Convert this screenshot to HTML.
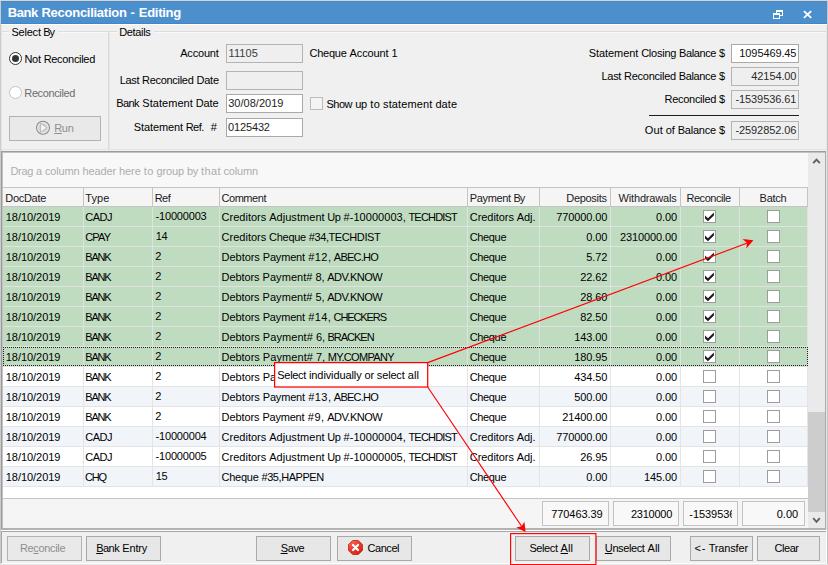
<!DOCTYPE html><html><head><meta charset="utf-8"><title>Bank Reconciliation</title><style>
*{box-sizing:border-box;margin:0;padding:0}
html,body{width:828px;height:565px;overflow:hidden;background:#f0f0f0}
body{font-family:"Liberation Sans",sans-serif;font-size:11px;color:#000;position:relative}
.a{position:absolute;white-space:pre}
.t{position:absolute;white-space:pre;line-height:13px;height:13px}
.inp{position:absolute;border:1px solid #a9a9a9;background:#fff;height:19px}
.inp.ro{background:#efefef;border-color:#b4b4b4}
.btn{position:absolute;border:1px solid #a9a9a9;background:#e7e7e7;height:25px}
.btn.dis{background:#e9e9e9;border-color:#b2b2b2}
u{text-decoration:underline}
.row{position:absolute;left:3px;width:805px;height:20px}
.g{background:#c0dcc0;border-bottom:1px solid #e0e2e0}
.w{background:#ffffff;border-bottom:1px solid #e4e4e4}
.b{background:#f1f5fa;border-bottom:1px solid #e4e4e4}
.hd{position:absolute;top:187px;height:20px;background:#f5f5f5;border-right:1px solid #c4c4c4;border-bottom:1px solid #c4c4c4;border-top:1px solid #c4c4c4}
.cb{position:absolute;width:13px;height:13px;border:1px solid #9d9d9d;background:#fff}
.sum{position:absolute;top:501px;height:25px;border:1px solid #c2c2c2;background:#f8f8f8;overflow:hidden}
</style></head><body>
<div class="a" style="left:0;top:0;width:1px;height:565px;background:#cbcbcb"></div>
<div class="a" style="left:1px;top:25px;width:1px;height:126px;background:#e4e4e4"></div>
<div class="a" style="left:826px;top:0;width:1px;height:565px;background:#e6e6e6"></div>
<div class="a" style="left:827px;top:0;width:1px;height:565px;background:#c4c4c4"></div>
<div class="a" style="left:0;top:0;width:828px;height:1px;background:#d9d6d2"></div>
<div class="a" style="left:1px;top:1px;width:826px;height:23px;background:#4c8fcd;border-top:1px solid #4788c8;border-bottom:1px solid #4485c6"></div>
<div class="a" style="left:1px;top:24px;width:826px;height:1px;background:#fdfdfd"></div>
<div class="t" style="left:7.90px;top:5px;color:#fff;font-size:13px;font-weight:bold;line-height:15px;height:15px"><span style="position:absolute;left:-0.19px;top:0;letter-spacing:-0.387px">Bank</span><span style="position:absolute;left:33.61px;top:0;letter-spacing:-0.270px">Reconciliation</span><span style="position:absolute;left:122.73px;top:0;letter-spacing:0.827px">-</span><span style="position:absolute;left:130.85px;top:0;letter-spacing:-0.255px">Editing</span></div>
<svg class="a" style="left:770px;top:6px" width="50" height="16" viewBox="770 6 50 16"><g fill="#fff"><path d="M776 10H783V16H780V15H782V12H777V13H776Z"/><path d="M773 13H780V19H773ZM774 15V18H779V15Z" fill-rule="evenodd"/></g><path d="M803.9 11.2L811.2 17.9M811.2 11.2L803.9 17.9" stroke="#fff" stroke-width="1.8" fill="none"/></svg>
<div class="a" style="left:2px;top:31px;width:824px;height:1px;background:#dcdcdc"></div>
<div class="a" style="left:2px;top:32px;width:824px;height:1px;background:#f8f8f8"></div>
<div class="a" style="left:108px;top:31px;width:1px;height:118px;background:#d9d9d9"></div>
<div class="a" style="left:109px;top:32px;width:1px;height:117px;background:#e6e6e6"></div>
<div class="a" style="left:2px;top:149px;width:824px;height:1px;background:#e4e4e4"></div>
<div class="a" style="left:9px;top:26px;width:49px;height:12px;background:#f0f0f0"></div>
<div class="a" style="left:117px;top:26px;width:37px;height:12px;background:#f0f0f0"></div>
<div class="t" style="left:11.60px;top:26px"><span style="position:absolute;left:-0.11px;top:0;letter-spacing:-0.219px">Select</span><span style="position:absolute;left:31.66px;top:0;letter-spacing:-1.054px">By</span></div>
<div class="t" style="left:119.30px;top:26px"><span style="position:absolute;left:-0.17px;top:0;letter-spacing:-0.335px">Details</span></div>
<div class="a" style="left:9px;top:52px;width:13px;height:13px;border:1px solid #333;border-radius:50%;background:#fff"></div>
<div class="a" style="left:12px;top:55px;width:7px;height:7px;border-radius:50%;background:#333"></div>
<div class="t" style="left:24.50px;top:53px"><span style="position:absolute;left:-0.11px;top:0;letter-spacing:-0.224px">Not</span><span style="position:absolute;left:19.19px;top:0;letter-spacing:-0.315px">Reconciled</span></div>
<div class="a" style="left:9px;top:86px;width:13px;height:13px;border:1px solid #c4c4c4;border-radius:50%;background:#fff"></div>
<div class="t" style="left:24.50px;top:87px;color:#6d6d6d"><span style="position:absolute;left:-0.19px;top:0;letter-spacing:-0.381px">Reconciled</span></div>
<div class="btn dis" style="left:9px;top:116px;width:92px"></div>
<svg class="a" style="left:35px;top:120px" width="16" height="16" viewBox="0 0 16 16"><circle cx="8" cy="7.8" r="6.5" fill="#dedede" stroke="#8c8c8c" stroke-width="1.1"/><circle cx="8" cy="7.8" r="5.1" fill="#d4d4d4" stroke="#ececec" stroke-width="0.8"/><path d="M5.6 3.4L11.8 7.8L5.6 12.2Z" fill="#f6f6f6" stroke="#a6a6a6" stroke-width="0.7"/></svg>
<div class="t" style="left:54.40px;top:122px;color:#8e8e8e"><span style="position:absolute;left:-0.16px;top:0;letter-spacing:-0.320px"><u>R</u>un</span></div>
<div class="t" style="left:180.30px;top:47px"><span style="position:absolute;left:-0.09px;top:0;letter-spacing:-0.184px">Account</span></div>
<div class="t" style="left:119.90px;top:74px"><span style="position:absolute;left:-0.17px;top:0;letter-spacing:-0.344px">Last</span><span style="position:absolute;left:22.18px;top:0;letter-spacing:-0.297px">Reconciled</span><span style="position:absolute;left:76.57px;top:0;letter-spacing:-0.227px">Date</span></div>
<div class="t" style="left:116.50px;top:97px"><span style="position:absolute;left:-0.28px;top:0;letter-spacing:-0.567px">Bank</span><span style="position:absolute;left:25.80px;top:0;letter-spacing:0.047px">Statement</span><span style="position:absolute;left:79.26px;top:0;letter-spacing:-0.108px">Date</span></div>
<div class="t" style="left:133.90px;top:121px"><span style="position:absolute;left:-0.06px;top:0;letter-spacing:-0.116px">Statement</span><span style="position:absolute;left:51.75px;top:0;letter-spacing:-0.471px">Ref.</span><span style="position:absolute;left:76.84px;top:0;letter-spacing:1.584px">#</span></div>
<div class="inp ro" style="left:226px;top:44px;width:77px"></div>
<div class="inp ro" style="left:226px;top:71px;width:77px"></div>
<div class="inp" style="left:226px;top:94px;width:77px"></div>
<div class="inp" style="left:226px;top:118px;width:77px"></div>
<div class="t" style="left:228.50px;top:47px;color:#3c3c3c"><span style="position:absolute;left:0.04px;top:0;letter-spacing:0.072px">11105</span></div>
<div class="t" style="left:228.20px;top:97px;color:#1c1c1c"><span style="position:absolute;left:0.01px;top:0;letter-spacing:0.026px">30/08/2019</span></div>
<div class="t" style="left:228.20px;top:121px;color:#1c1c1c"><span style="position:absolute;left:-0.08px;top:0;letter-spacing:-0.158px">0125432</span></div>
<div class="t" style="left:309.70px;top:47px"><span style="position:absolute;left:-0.13px;top:0;letter-spacing:-0.261px">Cheque</span><span style="position:absolute;left:39.91px;top:0;letter-spacing:-0.112px">Account</span><span style="position:absolute;left:81.86px;top:0;letter-spacing:-0.123px">1</span></div>
<div class="cb" style="left:310px;top:97px;border-color:#bcbcbc;background:#f4f4f4"></div>
<div class="t" style="left:326.60px;top:98px"><span style="position:absolute;left:-0.23px;top:0;letter-spacing:-0.452px">Show</span><span style="position:absolute;left:28.58px;top:0;letter-spacing:-0.185px">up</span><span style="position:absolute;left:43.68px;top:0;letter-spacing:0.357px">to</span><span style="position:absolute;left:56.42px;top:0;letter-spacing:0.126px">statement</span><span style="position:absolute;left:108.81px;top:0;letter-spacing:0.086px">date</span></div>
<div class="t" style="left:588.70px;top:47px"><span style="position:absolute;left:-0.03px;top:0;letter-spacing:-0.054px">Statement</span><span style="position:absolute;left:52.46px;top:0;letter-spacing:-0.233px">Closing</span><span style="position:absolute;left:90.36px;top:0;letter-spacing:-0.393px">Balance</span><span style="position:absolute;left:130.33px;top:0;letter-spacing:-0.276px">$</span></div>
<div class="t" style="left:601.70px;top:70px"><span style="position:absolute;left:-0.15px;top:0;letter-spacing:-0.304px">Last</span><span style="position:absolute;left:22.38px;top:0;letter-spacing:-0.255px">Reconciled</span><span style="position:absolute;left:77.13px;top:0;letter-spacing:-0.366px">Balance</span><span style="position:absolute;left:117.32px;top:0;letter-spacing:-0.246px">$</span></div>
<div class="t" style="left:664.60px;top:93px"><span style="position:absolute;left:-0.14px;top:0;letter-spacing:-0.278px">Reconciled</span><span style="position:absolute;left:54.43px;top:0;letter-spacing:-0.271px">$</span></div>
<div class="t" style="left:644.70px;top:124px"><span style="position:absolute;left:0.06px;top:0;letter-spacing:0.114px">Out</span><span style="position:absolute;left:21.05px;top:0;letter-spacing:-0.069px">of</span><span style="position:absolute;left:33.02px;top:0;letter-spacing:-0.229px">Balance</span><span style="position:absolute;left:74.25px;top:0;letter-spacing:-0.094px">$</span></div>
<div class="inp" style="left:731px;top:44px;width:68px"></div>
<div class="t" style="left:739.42px;top:47px;color:#111"><span style="position:absolute;left:-0.06px;top:0;letter-spacing:-0.112px">1095469.45</span></div>
<div class="inp ro" style="left:731px;top:67px;width:68px"></div>
<div class="t" style="left:751.42px;top:70px;color:#2a2a2a"><span style="position:absolute;left:-0.05px;top:0;letter-spacing:-0.110px">42154.00</span></div>
<div class="inp ro" style="left:731px;top:90px;width:68px"></div>
<div class="t" style="left:735.42px;top:93px;color:#2a2a2a"><span style="position:absolute;left:-0.04px;top:0;letter-spacing:-0.071px">-1539536.61</span></div>
<div class="inp ro" style="left:731px;top:121px;width:68px"></div>
<div class="t" style="left:735.42px;top:124px;color:#2a2a2a"><span style="position:absolute;left:-0.04px;top:0;letter-spacing:-0.071px">-2592852.06</span></div>
<div class="a" style="left:649px;top:115px;width:150px;height:1px;background:#1e1e1e"></div>
<div class="a" style="left:1px;top:151px;width:825px;height:379px;border:1px solid #9b9b9b;border-bottom:2px solid #b2b2b2;border-right-color:#ababab;background:#fff"></div>
<div class="a" style="left:2px;top:152px;width:823px;height:376px;border-top:1px solid #c2c2c2;border-left:1px solid #c2c2c2"></div>
<div class="a" style="left:3px;top:153px;width:805px;height:34px;background:#f8f8f8"></div>
<div class="t" style="left:10.50px;top:165px;color:#adadad"><span style="position:absolute;left:-0.14px;top:0;letter-spacing:-0.288px">Drag</span><span style="position:absolute;left:25.55px;top:0;letter-spacing:-0.199px">a</span><span style="position:absolute;left:34.45px;top:0;letter-spacing:-0.155px">column</span><span style="position:absolute;left:71.96px;top:0;letter-spacing:-0.118px">header</span><span style="position:absolute;left:108.48px;top:0;letter-spacing:-0.078px">here</span><span style="position:absolute;left:133.35px;top:0;letter-spacing:0.346px">to</span><span style="position:absolute;left:145.95px;top:0;letter-spacing:-0.102px">group</span><span style="position:absolute;left:176.40px;top:0;letter-spacing:-0.383px">by</span><span style="position:absolute;left:190.57px;top:0;letter-spacing:0.346px">that</span><span style="position:absolute;left:213.01px;top:0;letter-spacing:-0.155px">column</span></div>
<div class="hd" style="left:3px;width:81px"></div>
<div class="t" style="left:5.40px;top:192px;color:#1a1a1a"><span style="position:absolute;left:-0.15px;top:0;letter-spacing:-0.297px">DocDate</span></div>
<div class="hd" style="left:84px;width:69px"></div>
<div class="t" style="left:85.20px;top:192px;color:#1a1a1a"><span style="position:absolute;left:0.03px;top:0;letter-spacing:0.069px">Type</span></div>
<div class="hd" style="left:153px;width:67px"></div>
<div class="t" style="left:154.90px;top:192px;color:#1a1a1a"><span style="position:absolute;left:-0.24px;top:0;letter-spacing:-0.481px">Ref</span></div>
<div class="hd" style="left:220px;width:248px"></div>
<div class="t" style="left:221.70px;top:192px;color:#1a1a1a"><span style="position:absolute;left:-0.22px;top:0;letter-spacing:-0.447px">Comment</span></div>
<div class="hd" style="left:468px;width:72px"></div>
<div class="t" style="left:469.80px;top:192px;color:#1a1a1a"><span style="position:absolute;left:-0.16px;top:0;letter-spacing:-0.318px">Payment</span><span style="position:absolute;left:43.61px;top:0;letter-spacing:-1.026px">By</span></div>
<div class="hd" style="left:540px;width:71px"></div>
<div class="t" style="left:566.50px;top:192px;color:#1a1a1a"><span style="position:absolute;left:-0.16px;top:0;letter-spacing:-0.322px">Deposits</span></div>
<div class="hd" style="left:611px;width:70px"></div>
<div class="t" style="left:618.70px;top:192px;color:#1a1a1a"><span style="position:absolute;left:-0.09px;top:0;letter-spacing:-0.180px">Withdrawals</span></div>
<div class="hd" style="left:681px;width:59px"></div>
<div class="t" style="left:686.70px;top:192px;color:#1a1a1a"><span style="position:absolute;left:-0.23px;top:0;letter-spacing:-0.455px">Reconcile</span></div>
<div class="hd" style="left:740px;width:68px"></div>
<div class="t" style="left:759.70px;top:192px;color:#1a1a1a"><span style="position:absolute;left:-0.13px;top:0;letter-spacing:-0.262px">Batch</span></div>
<div class="row g" style="top:207px"></div>
<div class="a" style="left:83px;top:207px;width:1px;height:20px;background:#dfe3df"></div>
<div class="a" style="left:152px;top:207px;width:1px;height:20px;background:#dfe3df"></div>
<div class="a" style="left:219px;top:207px;width:1px;height:20px;background:#dfe3df"></div>
<div class="a" style="left:467px;top:207px;width:1px;height:20px;background:#dfe3df"></div>
<div class="a" style="left:539px;top:207px;width:1px;height:20px;background:#dfe3df"></div>
<div class="a" style="left:610px;top:207px;width:1px;height:20px;background:#dfe3df"></div>
<div class="a" style="left:680px;top:207px;width:1px;height:20px;background:#dfe3df"></div>
<div class="a" style="left:739px;top:207px;width:1px;height:20px;background:#dfe3df"></div>
<div class="a" style="left:807px;top:207px;width:1px;height:20px;background:#dfe3df"></div>
<div class="row g" style="top:227px"></div>
<div class="a" style="left:83px;top:227px;width:1px;height:20px;background:#dfe3df"></div>
<div class="a" style="left:152px;top:227px;width:1px;height:20px;background:#dfe3df"></div>
<div class="a" style="left:219px;top:227px;width:1px;height:20px;background:#dfe3df"></div>
<div class="a" style="left:467px;top:227px;width:1px;height:20px;background:#dfe3df"></div>
<div class="a" style="left:539px;top:227px;width:1px;height:20px;background:#dfe3df"></div>
<div class="a" style="left:610px;top:227px;width:1px;height:20px;background:#dfe3df"></div>
<div class="a" style="left:680px;top:227px;width:1px;height:20px;background:#dfe3df"></div>
<div class="a" style="left:739px;top:227px;width:1px;height:20px;background:#dfe3df"></div>
<div class="a" style="left:807px;top:227px;width:1px;height:20px;background:#dfe3df"></div>
<div class="row g" style="top:247px"></div>
<div class="a" style="left:83px;top:247px;width:1px;height:20px;background:#dfe3df"></div>
<div class="a" style="left:152px;top:247px;width:1px;height:20px;background:#dfe3df"></div>
<div class="a" style="left:219px;top:247px;width:1px;height:20px;background:#dfe3df"></div>
<div class="a" style="left:467px;top:247px;width:1px;height:20px;background:#dfe3df"></div>
<div class="a" style="left:539px;top:247px;width:1px;height:20px;background:#dfe3df"></div>
<div class="a" style="left:610px;top:247px;width:1px;height:20px;background:#dfe3df"></div>
<div class="a" style="left:680px;top:247px;width:1px;height:20px;background:#dfe3df"></div>
<div class="a" style="left:739px;top:247px;width:1px;height:20px;background:#dfe3df"></div>
<div class="a" style="left:807px;top:247px;width:1px;height:20px;background:#dfe3df"></div>
<div class="row g" style="top:267px"></div>
<div class="a" style="left:83px;top:267px;width:1px;height:20px;background:#dfe3df"></div>
<div class="a" style="left:152px;top:267px;width:1px;height:20px;background:#dfe3df"></div>
<div class="a" style="left:219px;top:267px;width:1px;height:20px;background:#dfe3df"></div>
<div class="a" style="left:467px;top:267px;width:1px;height:20px;background:#dfe3df"></div>
<div class="a" style="left:539px;top:267px;width:1px;height:20px;background:#dfe3df"></div>
<div class="a" style="left:610px;top:267px;width:1px;height:20px;background:#dfe3df"></div>
<div class="a" style="left:680px;top:267px;width:1px;height:20px;background:#dfe3df"></div>
<div class="a" style="left:739px;top:267px;width:1px;height:20px;background:#dfe3df"></div>
<div class="a" style="left:807px;top:267px;width:1px;height:20px;background:#dfe3df"></div>
<div class="row g" style="top:287px"></div>
<div class="a" style="left:83px;top:287px;width:1px;height:20px;background:#dfe3df"></div>
<div class="a" style="left:152px;top:287px;width:1px;height:20px;background:#dfe3df"></div>
<div class="a" style="left:219px;top:287px;width:1px;height:20px;background:#dfe3df"></div>
<div class="a" style="left:467px;top:287px;width:1px;height:20px;background:#dfe3df"></div>
<div class="a" style="left:539px;top:287px;width:1px;height:20px;background:#dfe3df"></div>
<div class="a" style="left:610px;top:287px;width:1px;height:20px;background:#dfe3df"></div>
<div class="a" style="left:680px;top:287px;width:1px;height:20px;background:#dfe3df"></div>
<div class="a" style="left:739px;top:287px;width:1px;height:20px;background:#dfe3df"></div>
<div class="a" style="left:807px;top:287px;width:1px;height:20px;background:#dfe3df"></div>
<div class="row g" style="top:307px"></div>
<div class="a" style="left:83px;top:307px;width:1px;height:20px;background:#dfe3df"></div>
<div class="a" style="left:152px;top:307px;width:1px;height:20px;background:#dfe3df"></div>
<div class="a" style="left:219px;top:307px;width:1px;height:20px;background:#dfe3df"></div>
<div class="a" style="left:467px;top:307px;width:1px;height:20px;background:#dfe3df"></div>
<div class="a" style="left:539px;top:307px;width:1px;height:20px;background:#dfe3df"></div>
<div class="a" style="left:610px;top:307px;width:1px;height:20px;background:#dfe3df"></div>
<div class="a" style="left:680px;top:307px;width:1px;height:20px;background:#dfe3df"></div>
<div class="a" style="left:739px;top:307px;width:1px;height:20px;background:#dfe3df"></div>
<div class="a" style="left:807px;top:307px;width:1px;height:20px;background:#dfe3df"></div>
<div class="row g" style="top:327px"></div>
<div class="a" style="left:83px;top:327px;width:1px;height:20px;background:#dfe3df"></div>
<div class="a" style="left:152px;top:327px;width:1px;height:20px;background:#dfe3df"></div>
<div class="a" style="left:219px;top:327px;width:1px;height:20px;background:#dfe3df"></div>
<div class="a" style="left:467px;top:327px;width:1px;height:20px;background:#dfe3df"></div>
<div class="a" style="left:539px;top:327px;width:1px;height:20px;background:#dfe3df"></div>
<div class="a" style="left:610px;top:327px;width:1px;height:20px;background:#dfe3df"></div>
<div class="a" style="left:680px;top:327px;width:1px;height:20px;background:#dfe3df"></div>
<div class="a" style="left:739px;top:327px;width:1px;height:20px;background:#dfe3df"></div>
<div class="a" style="left:807px;top:327px;width:1px;height:20px;background:#dfe3df"></div>
<div class="row g" style="top:347px"></div>
<div class="a" style="left:83px;top:347px;width:1px;height:20px;background:#dfe3df"></div>
<div class="a" style="left:152px;top:347px;width:1px;height:20px;background:#dfe3df"></div>
<div class="a" style="left:219px;top:347px;width:1px;height:20px;background:#dfe3df"></div>
<div class="a" style="left:467px;top:347px;width:1px;height:20px;background:#dfe3df"></div>
<div class="a" style="left:539px;top:347px;width:1px;height:20px;background:#dfe3df"></div>
<div class="a" style="left:610px;top:347px;width:1px;height:20px;background:#dfe3df"></div>
<div class="a" style="left:680px;top:347px;width:1px;height:20px;background:#dfe3df"></div>
<div class="a" style="left:739px;top:347px;width:1px;height:20px;background:#dfe3df"></div>
<div class="a" style="left:807px;top:347px;width:1px;height:20px;background:#dfe3df"></div>
<div class="row w" style="top:367px"></div>
<div class="a" style="left:83px;top:367px;width:1px;height:20px;background:#e4e4e4"></div>
<div class="a" style="left:152px;top:367px;width:1px;height:20px;background:#e4e4e4"></div>
<div class="a" style="left:219px;top:367px;width:1px;height:20px;background:#e4e4e4"></div>
<div class="a" style="left:467px;top:367px;width:1px;height:20px;background:#e4e4e4"></div>
<div class="a" style="left:539px;top:367px;width:1px;height:20px;background:#e4e4e4"></div>
<div class="a" style="left:610px;top:367px;width:1px;height:20px;background:#e4e4e4"></div>
<div class="a" style="left:680px;top:367px;width:1px;height:20px;background:#e4e4e4"></div>
<div class="a" style="left:739px;top:367px;width:1px;height:20px;background:#e4e4e4"></div>
<div class="a" style="left:807px;top:367px;width:1px;height:20px;background:#e4e4e4"></div>
<div class="row b" style="top:387px"></div>
<div class="a" style="left:83px;top:387px;width:1px;height:20px;background:#e3e4e6"></div>
<div class="a" style="left:152px;top:387px;width:1px;height:20px;background:#e3e4e6"></div>
<div class="a" style="left:219px;top:387px;width:1px;height:20px;background:#e3e4e6"></div>
<div class="a" style="left:467px;top:387px;width:1px;height:20px;background:#e3e4e6"></div>
<div class="a" style="left:539px;top:387px;width:1px;height:20px;background:#e3e4e6"></div>
<div class="a" style="left:610px;top:387px;width:1px;height:20px;background:#e3e4e6"></div>
<div class="a" style="left:680px;top:387px;width:1px;height:20px;background:#e3e4e6"></div>
<div class="a" style="left:739px;top:387px;width:1px;height:20px;background:#e3e4e6"></div>
<div class="a" style="left:807px;top:387px;width:1px;height:20px;background:#e3e4e6"></div>
<div class="row w" style="top:407px"></div>
<div class="a" style="left:83px;top:407px;width:1px;height:20px;background:#e4e4e4"></div>
<div class="a" style="left:152px;top:407px;width:1px;height:20px;background:#e4e4e4"></div>
<div class="a" style="left:219px;top:407px;width:1px;height:20px;background:#e4e4e4"></div>
<div class="a" style="left:467px;top:407px;width:1px;height:20px;background:#e4e4e4"></div>
<div class="a" style="left:539px;top:407px;width:1px;height:20px;background:#e4e4e4"></div>
<div class="a" style="left:610px;top:407px;width:1px;height:20px;background:#e4e4e4"></div>
<div class="a" style="left:680px;top:407px;width:1px;height:20px;background:#e4e4e4"></div>
<div class="a" style="left:739px;top:407px;width:1px;height:20px;background:#e4e4e4"></div>
<div class="a" style="left:807px;top:407px;width:1px;height:20px;background:#e4e4e4"></div>
<div class="row b" style="top:427px"></div>
<div class="a" style="left:83px;top:427px;width:1px;height:20px;background:#e3e4e6"></div>
<div class="a" style="left:152px;top:427px;width:1px;height:20px;background:#e3e4e6"></div>
<div class="a" style="left:219px;top:427px;width:1px;height:20px;background:#e3e4e6"></div>
<div class="a" style="left:467px;top:427px;width:1px;height:20px;background:#e3e4e6"></div>
<div class="a" style="left:539px;top:427px;width:1px;height:20px;background:#e3e4e6"></div>
<div class="a" style="left:610px;top:427px;width:1px;height:20px;background:#e3e4e6"></div>
<div class="a" style="left:680px;top:427px;width:1px;height:20px;background:#e3e4e6"></div>
<div class="a" style="left:739px;top:427px;width:1px;height:20px;background:#e3e4e6"></div>
<div class="a" style="left:807px;top:427px;width:1px;height:20px;background:#e3e4e6"></div>
<div class="row w" style="top:447px"></div>
<div class="a" style="left:83px;top:447px;width:1px;height:20px;background:#e4e4e4"></div>
<div class="a" style="left:152px;top:447px;width:1px;height:20px;background:#e4e4e4"></div>
<div class="a" style="left:219px;top:447px;width:1px;height:20px;background:#e4e4e4"></div>
<div class="a" style="left:467px;top:447px;width:1px;height:20px;background:#e4e4e4"></div>
<div class="a" style="left:539px;top:447px;width:1px;height:20px;background:#e4e4e4"></div>
<div class="a" style="left:610px;top:447px;width:1px;height:20px;background:#e4e4e4"></div>
<div class="a" style="left:680px;top:447px;width:1px;height:20px;background:#e4e4e4"></div>
<div class="a" style="left:739px;top:447px;width:1px;height:20px;background:#e4e4e4"></div>
<div class="a" style="left:807px;top:447px;width:1px;height:20px;background:#e4e4e4"></div>
<div class="row b" style="top:467px"></div>
<div class="a" style="left:83px;top:467px;width:1px;height:20px;background:#e3e4e6"></div>
<div class="a" style="left:152px;top:467px;width:1px;height:20px;background:#e3e4e6"></div>
<div class="a" style="left:219px;top:467px;width:1px;height:20px;background:#e3e4e6"></div>
<div class="a" style="left:467px;top:467px;width:1px;height:20px;background:#e3e4e6"></div>
<div class="a" style="left:539px;top:467px;width:1px;height:20px;background:#e3e4e6"></div>
<div class="a" style="left:610px;top:467px;width:1px;height:20px;background:#e3e4e6"></div>
<div class="a" style="left:680px;top:467px;width:1px;height:20px;background:#e3e4e6"></div>
<div class="a" style="left:739px;top:467px;width:1px;height:20px;background:#e3e4e6"></div>
<div class="a" style="left:807px;top:467px;width:1px;height:20px;background:#e3e4e6"></div>
<div class="t" style="left:5.80px;top:211px"><span style="position:absolute;left:-0.02px;top:0;letter-spacing:-0.044px">18/10/2019</span></div>
<div class="t" style="left:85.60px;top:211px"><span style="position:absolute;left:-0.28px;top:0;letter-spacing:-0.554px">CADJ</span></div>
<div class="t" style="left:155.60px;top:210px"><span style="position:absolute;left:-0.09px;top:0;letter-spacing:-0.177px">-10000003</span></div>
<div class="t" style="left:221.60px;top:211px"><span style="position:absolute;left:-0.00px;top:0">Creditors</span><span style="position:absolute;left:47.58px;top:0;letter-spacing:0.046px">Adjustment</span><span style="position:absolute;left:105.73px;top:0;letter-spacing:-0.590px">Up</span><span style="position:absolute;left:121.90px;top:0;letter-spacing:0.059px">#-10000003,</span><span style="position:absolute;left:186.87px;top:0;letter-spacing:-0.806px">TECHDIST</span></div>
<div class="t" style="left:469.80px;top:211px"><span style="position:absolute;left:-0.03px;top:0;letter-spacing:-0.058px">Creditors</span><span style="position:absolute;left:46.99px;top:0;letter-spacing:-0.084px">Adj.</span></div>
<div class="t" style="left:556.22px;top:211px"><span style="position:absolute;left:-0.06px;top:0;letter-spacing:-0.111px">770000.00</span></div>
<div class="t" style="left:656.12px;top:211px"><span style="position:absolute;left:-0.05px;top:0;letter-spacing:-0.102px">0.00</span></div>
<div class="cb" style="left:703px;top:210px"></div>
<svg class="a" style="left:703px;top:210px" width="13" height="13" viewBox="0 0 13 13"><path d="M2.0 5.5L4.9 8.3L10.9 2.5V5.4L4.9 11.2L2.0 8.4Z" fill="#1e1e1e"/></svg>
<div class="cb" style="left:767px;top:210px"></div>
<div class="t" style="left:5.80px;top:231px"><span style="position:absolute;left:-0.02px;top:0;letter-spacing:-0.044px">18/10/2019</span></div>
<div class="t" style="left:85.60px;top:231px"><span style="position:absolute;left:-0.41px;top:0;letter-spacing:-0.815px">CPAY</span></div>
<div class="t" style="left:156.10px;top:230px"><span style="position:absolute;left:-0.28px;top:0;letter-spacing:-0.563px">14</span></div>
<div class="t" style="left:221.60px;top:231px"><span style="position:absolute;left:0.00px;top:0;letter-spacing:0.008px">Creditors</span><span style="position:absolute;left:47.53px;top:0;letter-spacing:-0.297px">Cheque</span><span style="position:absolute;left:87.20px;top:0;letter-spacing:-0.408px">#34,TECHDIST</span></div>
<div class="t" style="left:469.80px;top:231px"><span style="position:absolute;left:-0.17px;top:0;letter-spacing:-0.336px">Cheque</span></div>
<div class="t" style="left:586.22px;top:231px"><span style="position:absolute;left:-0.05px;top:0;letter-spacing:-0.102px">0.00</span></div>
<div class="t" style="left:620.12px;top:231px"><span style="position:absolute;left:-0.06px;top:0;letter-spacing:-0.112px">2310000.00</span></div>
<div class="cb" style="left:703px;top:230px"></div>
<svg class="a" style="left:703px;top:230px" width="13" height="13" viewBox="0 0 13 13"><path d="M2.0 5.5L4.9 8.3L10.9 2.5V5.4L4.9 11.2L2.0 8.4Z" fill="#1e1e1e"/></svg>
<div class="cb" style="left:767px;top:230px"></div>
<div class="t" style="left:5.80px;top:251px"><span style="position:absolute;left:-0.02px;top:0;letter-spacing:-0.044px">18/10/2019</span></div>
<div class="t" style="left:85.90px;top:251px"><span style="position:absolute;left:-0.60px;top:0;letter-spacing:-1.200px">BANK</span></div>
<div class="t" style="left:155.60px;top:250px"><span style="position:absolute;left:-0.30px;top:0;letter-spacing:-0.598px">2</span></div>
<div class="t" style="left:221.60px;top:251px"><span style="position:absolute;left:-0.02px;top:0;letter-spacing:-0.044px">Debtors</span><span style="position:absolute;left:41.14px;top:0;letter-spacing:-0.168px">Payment</span><span style="position:absolute;left:86.69px;top:0;letter-spacing:0.429px">#12,</span><span style="position:absolute;left:112.24px;top:0;letter-spacing:-0.753px">ABEC.HO</span></div>
<div class="t" style="left:469.80px;top:251px"><span style="position:absolute;left:-0.17px;top:0;letter-spacing:-0.336px">Cheque</span></div>
<div class="t" style="left:586.22px;top:251px"><span style="position:absolute;left:-0.05px;top:0;letter-spacing:-0.102px">5.72</span></div>
<div class="t" style="left:656.12px;top:251px"><span style="position:absolute;left:-0.05px;top:0;letter-spacing:-0.102px">0.00</span></div>
<div class="cb" style="left:703px;top:250px"></div>
<svg class="a" style="left:703px;top:250px" width="13" height="13" viewBox="0 0 13 13"><path d="M2.0 5.5L4.9 8.3L10.9 2.5V5.4L4.9 11.2L2.0 8.4Z" fill="#1e1e1e"/></svg>
<div class="cb" style="left:767px;top:250px"></div>
<div class="t" style="left:5.80px;top:271px"><span style="position:absolute;left:-0.02px;top:0;letter-spacing:-0.044px">18/10/2019</span></div>
<div class="t" style="left:85.90px;top:271px"><span style="position:absolute;left:-0.60px;top:0;letter-spacing:-1.200px">BANK</span></div>
<div class="t" style="left:155.60px;top:270px"><span style="position:absolute;left:-0.30px;top:0;letter-spacing:-0.598px">2</span></div>
<div class="t" style="left:221.60px;top:271px"><span style="position:absolute;left:-0.04px;top:0;letter-spacing:-0.081px">Debtors</span><span style="position:absolute;left:40.97px;top:0;letter-spacing:0.051px">Payment#</span><span style="position:absolute;left:93.83px;top:0;letter-spacing:-0.093px">8,</span><span style="position:absolute;left:105.61px;top:0;letter-spacing:-0.495px">ADV.KNOW</span></div>
<div class="t" style="left:469.80px;top:271px"><span style="position:absolute;left:-0.17px;top:0;letter-spacing:-0.336px">Cheque</span></div>
<div class="t" style="left:580.22px;top:271px"><span style="position:absolute;left:-0.05px;top:0;letter-spacing:-0.105px">22.62</span></div>
<div class="t" style="left:656.12px;top:271px"><span style="position:absolute;left:-0.05px;top:0;letter-spacing:-0.102px">0.00</span></div>
<div class="cb" style="left:703px;top:270px"></div>
<svg class="a" style="left:703px;top:270px" width="13" height="13" viewBox="0 0 13 13"><path d="M2.0 5.5L4.9 8.3L10.9 2.5V5.4L4.9 11.2L2.0 8.4Z" fill="#1e1e1e"/></svg>
<div class="cb" style="left:767px;top:270px"></div>
<div class="t" style="left:5.80px;top:291px"><span style="position:absolute;left:-0.02px;top:0;letter-spacing:-0.044px">18/10/2019</span></div>
<div class="t" style="left:85.90px;top:291px"><span style="position:absolute;left:-0.60px;top:0;letter-spacing:-1.200px">BANK</span></div>
<div class="t" style="left:155.60px;top:290px"><span style="position:absolute;left:-0.30px;top:0;letter-spacing:-0.598px">2</span></div>
<div class="t" style="left:221.60px;top:291px"><span style="position:absolute;left:-0.04px;top:0;letter-spacing:-0.081px">Debtors</span><span style="position:absolute;left:40.97px;top:0;letter-spacing:0.051px">Payment#</span><span style="position:absolute;left:93.83px;top:0;letter-spacing:-0.093px">5,</span><span style="position:absolute;left:105.61px;top:0;letter-spacing:-0.495px">ADV.KNOW</span></div>
<div class="t" style="left:469.80px;top:291px"><span style="position:absolute;left:-0.17px;top:0;letter-spacing:-0.336px">Cheque</span></div>
<div class="t" style="left:580.22px;top:291px"><span style="position:absolute;left:-0.05px;top:0;letter-spacing:-0.105px">28.60</span></div>
<div class="t" style="left:656.12px;top:291px"><span style="position:absolute;left:-0.05px;top:0;letter-spacing:-0.102px">0.00</span></div>
<div class="cb" style="left:703px;top:290px"></div>
<svg class="a" style="left:703px;top:290px" width="13" height="13" viewBox="0 0 13 13"><path d="M2.0 5.5L4.9 8.3L10.9 2.5V5.4L4.9 11.2L2.0 8.4Z" fill="#1e1e1e"/></svg>
<div class="cb" style="left:767px;top:290px"></div>
<div class="t" style="left:5.80px;top:311px"><span style="position:absolute;left:-0.02px;top:0;letter-spacing:-0.044px">18/10/2019</span></div>
<div class="t" style="left:85.90px;top:311px"><span style="position:absolute;left:-0.60px;top:0;letter-spacing:-1.200px">BANK</span></div>
<div class="t" style="left:155.60px;top:310px"><span style="position:absolute;left:-0.30px;top:0;letter-spacing:-0.598px">2</span></div>
<div class="t" style="left:221.60px;top:311px"><span style="position:absolute;left:-0.02px;top:0;letter-spacing:-0.046px">Debtors</span><span style="position:absolute;left:41.12px;top:0;letter-spacing:-0.171px">Payment</span><span style="position:absolute;left:86.65px;top:0;letter-spacing:0.427px">#14,</span><span style="position:absolute;left:112.02px;top:0;letter-spacing:-1.107px">CHECKERS</span></div>
<div class="t" style="left:469.80px;top:311px"><span style="position:absolute;left:-0.17px;top:0;letter-spacing:-0.336px">Cheque</span></div>
<div class="t" style="left:580.22px;top:311px"><span style="position:absolute;left:-0.05px;top:0;letter-spacing:-0.105px">82.50</span></div>
<div class="t" style="left:656.12px;top:311px"><span style="position:absolute;left:-0.05px;top:0;letter-spacing:-0.102px">0.00</span></div>
<div class="cb" style="left:703px;top:310px"></div>
<svg class="a" style="left:703px;top:310px" width="13" height="13" viewBox="0 0 13 13"><path d="M2.0 5.5L4.9 8.3L10.9 2.5V5.4L4.9 11.2L2.0 8.4Z" fill="#1e1e1e"/></svg>
<div class="cb" style="left:767px;top:310px"></div>
<div class="t" style="left:5.80px;top:331px"><span style="position:absolute;left:-0.02px;top:0;letter-spacing:-0.044px">18/10/2019</span></div>
<div class="t" style="left:85.90px;top:331px"><span style="position:absolute;left:-0.60px;top:0;letter-spacing:-1.200px">BANK</span></div>
<div class="t" style="left:155.60px;top:330px"><span style="position:absolute;left:-0.30px;top:0;letter-spacing:-0.598px">2</span></div>
<div class="t" style="left:221.60px;top:331px"><span style="position:absolute;left:-0.03px;top:0;letter-spacing:-0.054px">Debtors</span><span style="position:absolute;left:41.19px;top:0;letter-spacing:0.081px">Payment#</span><span style="position:absolute;left:94.30px;top:0;letter-spacing:-0.071px">6,</span><span style="position:absolute;left:105.88px;top:0;letter-spacing:-1.002px">BRACKEN</span></div>
<div class="t" style="left:469.80px;top:331px"><span style="position:absolute;left:-0.17px;top:0;letter-spacing:-0.336px">Cheque</span></div>
<div class="t" style="left:574.22px;top:331px"><span style="position:absolute;left:-0.05px;top:0;letter-spacing:-0.107px">143.00</span></div>
<div class="t" style="left:656.12px;top:331px"><span style="position:absolute;left:-0.05px;top:0;letter-spacing:-0.102px">0.00</span></div>
<div class="cb" style="left:703px;top:330px"></div>
<svg class="a" style="left:703px;top:330px" width="13" height="13" viewBox="0 0 13 13"><path d="M2.0 5.5L4.9 8.3L10.9 2.5V5.4L4.9 11.2L2.0 8.4Z" fill="#1e1e1e"/></svg>
<div class="cb" style="left:767px;top:330px"></div>
<div class="t" style="left:5.80px;top:351px"><span style="position:absolute;left:-0.02px;top:0;letter-spacing:-0.044px">18/10/2019</span></div>
<div class="t" style="left:85.90px;top:351px"><span style="position:absolute;left:-0.60px;top:0;letter-spacing:-1.200px">BANK</span></div>
<div class="t" style="left:155.60px;top:350px"><span style="position:absolute;left:-0.30px;top:0;letter-spacing:-0.598px">2</span></div>
<div class="t" style="left:221.60px;top:351px"><span style="position:absolute;left:-0.03px;top:0;letter-spacing:-0.054px">Debtors</span><span style="position:absolute;left:41.19px;top:0;letter-spacing:0.082px">Payment#</span><span style="position:absolute;left:94.31px;top:0;letter-spacing:-0.070px">7,</span><span style="position:absolute;left:106.06px;top:0;letter-spacing:-0.670px">MY.COMPANY</span></div>
<div class="t" style="left:469.80px;top:351px"><span style="position:absolute;left:-0.17px;top:0;letter-spacing:-0.336px">Cheque</span></div>
<div class="t" style="left:574.22px;top:351px"><span style="position:absolute;left:-0.05px;top:0;letter-spacing:-0.107px">180.95</span></div>
<div class="t" style="left:656.12px;top:351px"><span style="position:absolute;left:-0.05px;top:0;letter-spacing:-0.102px">0.00</span></div>
<div class="cb" style="left:703px;top:350px"></div>
<svg class="a" style="left:703px;top:350px" width="13" height="13" viewBox="0 0 13 13"><path d="M2.0 5.5L4.9 8.3L10.9 2.5V5.4L4.9 11.2L2.0 8.4Z" fill="#1e1e1e"/></svg>
<div class="cb" style="left:767px;top:350px"></div>
<div class="t" style="left:5.80px;top:371px"><span style="position:absolute;left:-0.02px;top:0;letter-spacing:-0.044px">18/10/2019</span></div>
<div class="t" style="left:85.90px;top:371px"><span style="position:absolute;left:-0.60px;top:0;letter-spacing:-1.200px">BANK</span></div>
<div class="t" style="left:155.60px;top:370px"><span style="position:absolute;left:-0.30px;top:0;letter-spacing:-0.598px">2</span></div>
<div class="t" style="left:221.60px;top:371px"><span style="position:absolute;left:-0.02px;top:0;letter-spacing:-0.044px">Debtors</span><span style="position:absolute;left:41.14px;top:0;letter-spacing:-0.168px">Payment</span><span style="position:absolute;left:86.79px;top:0;letter-spacing:0.633px">#11,</span><span style="position:absolute;left:112.24px;top:0;letter-spacing:-0.753px">ABEC.HO</span></div>
<div class="t" style="left:469.80px;top:371px"><span style="position:absolute;left:-0.17px;top:0;letter-spacing:-0.336px">Cheque</span></div>
<div class="t" style="left:574.22px;top:371px"><span style="position:absolute;left:-0.05px;top:0;letter-spacing:-0.107px">434.50</span></div>
<div class="t" style="left:656.12px;top:371px"><span style="position:absolute;left:-0.05px;top:0;letter-spacing:-0.102px">0.00</span></div>
<div class="cb" style="left:703px;top:370px"></div>
<div class="cb" style="left:767px;top:370px"></div>
<div class="t" style="left:5.80px;top:391px"><span style="position:absolute;left:-0.02px;top:0;letter-spacing:-0.044px">18/10/2019</span></div>
<div class="t" style="left:85.90px;top:391px"><span style="position:absolute;left:-0.60px;top:0;letter-spacing:-1.200px">BANK</span></div>
<div class="t" style="left:155.60px;top:390px"><span style="position:absolute;left:-0.30px;top:0;letter-spacing:-0.598px">2</span></div>
<div class="t" style="left:221.60px;top:391px"><span style="position:absolute;left:-0.02px;top:0;letter-spacing:-0.044px">Debtors</span><span style="position:absolute;left:41.14px;top:0;letter-spacing:-0.168px">Payment</span><span style="position:absolute;left:86.69px;top:0;letter-spacing:0.429px">#13,</span><span style="position:absolute;left:112.24px;top:0;letter-spacing:-0.753px">ABEC.HO</span></div>
<div class="t" style="left:469.80px;top:391px"><span style="position:absolute;left:-0.17px;top:0;letter-spacing:-0.336px">Cheque</span></div>
<div class="t" style="left:574.22px;top:391px"><span style="position:absolute;left:-0.05px;top:0;letter-spacing:-0.107px">500.00</span></div>
<div class="t" style="left:656.12px;top:391px"><span style="position:absolute;left:-0.05px;top:0;letter-spacing:-0.102px">0.00</span></div>
<div class="cb" style="left:703px;top:390px"></div>
<div class="cb" style="left:767px;top:390px"></div>
<div class="t" style="left:5.80px;top:411px"><span style="position:absolute;left:-0.02px;top:0;letter-spacing:-0.044px">18/10/2019</span></div>
<div class="t" style="left:85.90px;top:411px"><span style="position:absolute;left:-0.60px;top:0;letter-spacing:-1.200px">BANK</span></div>
<div class="t" style="left:155.60px;top:410px"><span style="position:absolute;left:-0.30px;top:0;letter-spacing:-0.598px">2</span></div>
<div class="t" style="left:221.60px;top:411px"><span style="position:absolute;left:-0.04px;top:0;letter-spacing:-0.081px">Debtors</span><span style="position:absolute;left:40.84px;top:0;letter-spacing:-0.209px">Payment</span><span style="position:absolute;left:86.17px;top:0;letter-spacing:0.562px">#9,</span><span style="position:absolute;left:105.61px;top:0;letter-spacing:-0.495px">ADV.KNOW</span></div>
<div class="t" style="left:469.80px;top:411px"><span style="position:absolute;left:-0.17px;top:0;letter-spacing:-0.336px">Cheque</span></div>
<div class="t" style="left:562.22px;top:411px"><span style="position:absolute;left:-0.05px;top:0;letter-spacing:-0.110px">21400.00</span></div>
<div class="t" style="left:656.12px;top:411px"><span style="position:absolute;left:-0.05px;top:0;letter-spacing:-0.102px">0.00</span></div>
<div class="cb" style="left:703px;top:410px"></div>
<div class="cb" style="left:767px;top:410px"></div>
<div class="t" style="left:5.80px;top:431px"><span style="position:absolute;left:-0.02px;top:0;letter-spacing:-0.044px">18/10/2019</span></div>
<div class="t" style="left:85.60px;top:431px"><span style="position:absolute;left:-0.28px;top:0;letter-spacing:-0.554px">CADJ</span></div>
<div class="t" style="left:155.60px;top:430px"><span style="position:absolute;left:-0.09px;top:0;letter-spacing:-0.177px">-10000004</span></div>
<div class="t" style="left:221.60px;top:431px"><span style="position:absolute;left:-0.00px;top:0">Creditors</span><span style="position:absolute;left:47.58px;top:0;letter-spacing:0.046px">Adjustment</span><span style="position:absolute;left:105.73px;top:0;letter-spacing:-0.590px">Up</span><span style="position:absolute;left:121.90px;top:0;letter-spacing:0.059px">#-10000004,</span><span style="position:absolute;left:186.87px;top:0;letter-spacing:-0.806px">TECHDIST</span></div>
<div class="t" style="left:469.80px;top:431px"><span style="position:absolute;left:-0.03px;top:0;letter-spacing:-0.058px">Creditors</span><span style="position:absolute;left:46.99px;top:0;letter-spacing:-0.084px">Adj.</span></div>
<div class="t" style="left:556.22px;top:431px"><span style="position:absolute;left:-0.06px;top:0;letter-spacing:-0.111px">770000.00</span></div>
<div class="t" style="left:656.12px;top:431px"><span style="position:absolute;left:-0.05px;top:0;letter-spacing:-0.102px">0.00</span></div>
<div class="cb" style="left:703px;top:430px"></div>
<div class="cb" style="left:767px;top:430px"></div>
<div class="t" style="left:5.80px;top:451px"><span style="position:absolute;left:-0.02px;top:0;letter-spacing:-0.044px">18/10/2019</span></div>
<div class="t" style="left:85.60px;top:451px"><span style="position:absolute;left:-0.28px;top:0;letter-spacing:-0.554px">CADJ</span></div>
<div class="t" style="left:155.60px;top:450px"><span style="position:absolute;left:-0.09px;top:0;letter-spacing:-0.177px">-10000005</span></div>
<div class="t" style="left:221.60px;top:451px"><span style="position:absolute;left:-0.00px;top:0">Creditors</span><span style="position:absolute;left:47.58px;top:0;letter-spacing:0.046px">Adjustment</span><span style="position:absolute;left:105.73px;top:0;letter-spacing:-0.590px">Up</span><span style="position:absolute;left:121.90px;top:0;letter-spacing:0.059px">#-10000005,</span><span style="position:absolute;left:186.87px;top:0;letter-spacing:-0.806px">TECHDIST</span></div>
<div class="t" style="left:469.80px;top:451px"><span style="position:absolute;left:-0.03px;top:0;letter-spacing:-0.058px">Creditors</span><span style="position:absolute;left:46.99px;top:0;letter-spacing:-0.084px">Adj.</span></div>
<div class="t" style="left:580.22px;top:451px"><span style="position:absolute;left:-0.05px;top:0;letter-spacing:-0.105px">26.95</span></div>
<div class="t" style="left:656.12px;top:451px"><span style="position:absolute;left:-0.05px;top:0;letter-spacing:-0.102px">0.00</span></div>
<div class="cb" style="left:703px;top:450px"></div>
<div class="cb" style="left:767px;top:450px"></div>
<div class="t" style="left:5.80px;top:471px"><span style="position:absolute;left:-0.02px;top:0;letter-spacing:-0.044px">18/10/2019</span></div>
<div class="t" style="left:85.60px;top:471px"><span style="position:absolute;left:-0.60px;top:0;letter-spacing:-1.200px">CHQ</span></div>
<div class="t" style="left:156.10px;top:470px"><span style="position:absolute;left:-0.28px;top:0;letter-spacing:-0.563px">15</span></div>
<div class="t" style="left:221.60px;top:471px"><span style="position:absolute;left:-0.12px;top:0;letter-spacing:-0.235px">Cheque</span><span style="position:absolute;left:39.91px;top:0;letter-spacing:-0.444px">#35,HAPPEN</span></div>
<div class="t" style="left:469.80px;top:471px"><span style="position:absolute;left:-0.17px;top:0;letter-spacing:-0.336px">Cheque</span></div>
<div class="t" style="left:586.22px;top:471px"><span style="position:absolute;left:-0.05px;top:0;letter-spacing:-0.102px">0.00</span></div>
<div class="t" style="left:644.12px;top:471px"><span style="position:absolute;left:-0.05px;top:0;letter-spacing:-0.107px">145.00</span></div>
<div class="cb" style="left:703px;top:470px"></div>
<div class="cb" style="left:767px;top:470px"></div>
<div class="a" style="left:3px;top:347px;width:805px;height:19px;border:1px dotted #222"></div>
<div class="a" style="left:3px;top:498px;width:805px;height:30px;background:#f5f5f5;border-top:1px solid #c4c4c4"></div>
<div class="sum" style="left:542px;width:67px"></div>
<div class="sum" style="left:613px;width:66px"></div>
<div class="sum" style="left:683px;width:55px"></div>
<div class="sum" style="left:742px;width:63px"></div>
<div class="a" style="left:808px;top:153px;width:17px;height:375px;background:#eaeaea"></div>
<div class="a" style="left:808px;top:412px;width:17px;height:100px;background:#cdcdcd"></div>
<svg class="a" style="left:808px;top:153px" width="17" height="17" viewBox="0 0 17 17"><path d="M5.2 10.2L8.5 6.6L11.8 10.2" fill="none" stroke="#606060" stroke-width="1.9"/></svg>
<svg class="a" style="left:808px;top:512px" width="17" height="17" viewBox="0 0 17 17"><path d="M5.2 6.2L8.5 9.8L11.8 6.2" fill="none" stroke="#606060" stroke-width="1.9"/></svg>
<div class="a" style="left:1px;top:530px;width:826px;height:1px;background:#fcfcfc"></div>
<div class="a" style="left:1px;top:531px;width:825px;height:1px;background:#a6a6a6"></div>
<div class="a" style="left:1px;top:531px;width:1px;height:32px;background:#a6a6a6"></div>
<div class="a" style="left:826px;top:531px;width:1px;height:33px;background:#fcfcfc"></div>
<div class="btn dis" style="left:7px;top:536px;width:75px"></div>
<div class="btn" style="left:86px;top:536px;width:75px"></div>
<div class="btn" style="left:256px;top:536px;width:75px"></div>
<div class="btn" style="left:337px;top:536px;width:75px"></div>
<svg class="a" style="left:348px;top:540px" width="15" height="15" viewBox="0 0 15 15"><defs><linearGradient id="cg" x1="0" y1="0" x2="0.7" y2="1"><stop offset="0" stop-color="#fb7a62"/><stop offset="0.5" stop-color="#ec3d2a"/><stop offset="1" stop-color="#d62414"/></linearGradient></defs><path d="M4.6 0.6H10.4L14.4 4.6V10.4L10.4 14.4H4.6L0.6 10.4V4.6Z" fill="url(#cg)" stroke="#c7301f" stroke-width="1"/><path d="M5 5L10 10M10 5L5 10" stroke="#fff" stroke-width="2.3" stroke-linecap="round"/></svg>
<div class="btn" style="left:515px;top:536px;width:75px"></div>
<div class="btn" style="left:596px;top:536px;width:75px"></div>
<div class="btn" style="left:690px;top:536px;width:63px"></div>
<div class="btn" style="left:757px;top:536px;width:63px"></div>
<div class="a" style="left:1px;top:563px;width:826px;height:1px;background:#fcfcfc"></div>
<div class="a" style="left:0px;top:564px;width:828px;height:1px;background:#e6e6e6"></div>
<svg class="a" style="left:0;top:0" width="828" height="565" viewBox="0 0 828 565"><g stroke="#ff0000" stroke-width="1.15" fill="none"><path d="M427.7 362.6L748 242.8"/><path d="M427.7 387L521.6 526.3"/><rect x="510.6" y="533.6" width="85.3" height="31" /></g><path d="M753.4 240.3L742.6 239L747 243.1L746.3 248.5Z" fill="#ff0000"/><path d="M525.6 532L516.2 527.4L521.6 526.2L524.4 521.8Z" fill="#ff0000"/><rect x="274.6" y="362.6" width="153.1" height="24.4" fill="#fff" stroke="#ff0000" stroke-width="1.25"/></svg>
<div class="t" style="left:277.50px;top:369px"><span style="position:absolute;left:-0.16px;top:0;letter-spacing:-0.314px">Select</span><span style="position:absolute;left:31.51px;top:0;letter-spacing:-0.101px">individually</span><span style="position:absolute;left:86.96px;top:0;letter-spacing:-0.109px">or</span><span style="position:absolute;left:99.37px;top:0;letter-spacing:-0.167px">select</span><span style="position:absolute;left:130.13px;top:0;letter-spacing:0.157px">all</span></div>
<div class="t" style="left:20.10px;top:542px;color:#8f8f8f"><span style="position:absolute;left:-0.17px;top:0;letter-spacing:-0.332px">Re<u>c</u>oncile</span></div>
<div class="t" style="left:96.50px;top:542px"><span style="position:absolute;left:-0.27px;top:0;letter-spacing:-0.540px"><u>B</u>ank</span><span style="position:absolute;left:25.82px;top:0;letter-spacing:-0.154px">Entry</span></div>
<div class="t" style="left:280.80px;top:542px"><span style="position:absolute;left:-0.17px;top:0;letter-spacing:-0.338px"><u>S</u>ave</span></div>
<div class="t" style="left:367.70px;top:542px"><span style="position:absolute;left:-0.22px;top:0;letter-spacing:-0.436px">Cancel</span></div>
<div class="t" style="left:529.60px;top:542px"><span style="position:absolute;left:-0.20px;top:0;letter-spacing:-0.398px">Select</span><span style="position:absolute;left:31.00px;top:0"><u>A</u>ll</span></div>
<div class="t" style="left:605.00px;top:542px"><span style="position:absolute;left:-0.19px;top:0;letter-spacing:-0.387px"><u>U</u>nselect</span><span style="position:absolute;left:42.54px;top:0;letter-spacing:0.021px">All</span></div>
<div class="t" style="left:694.00px;top:542px"><span style="position:absolute;left:0.43px;top:0;letter-spacing:0.855px">&lt;-</span><span style="position:absolute;left:14.67px;top:0;letter-spacing:-0.153px">Transfer</span></div>
<div class="t" style="left:774.80px;top:542px"><span style="position:absolute;left:-0.24px;top:0;letter-spacing:-0.473px">Clear</span></div>
<div class="t" style="left:551.30px;top:508px"><span style="position:absolute;left:-0.04px;top:0;letter-spacing:-0.087px">770463.39</span></div>
<div class="t" style="left:631.00px;top:508px"><span style="position:absolute;left:-0.11px;top:0;letter-spacing:-0.230px">2310000</span></div>
<div class="t" style="left:776.70px;top:508px"><span style="position:absolute;left:0.01px;top:0;letter-spacing:0.028px">0.00</span></div>
<div class="a" style="left:684px;top:502px;width:48px;height:23px;overflow:hidden">
<div class="t" style="left:5.40px;top:6px"><span style="position:absolute;left:-0.04px;top:0;letter-spacing:-0.071px">-1539536.61</span></div>
</div>
</body></html>
